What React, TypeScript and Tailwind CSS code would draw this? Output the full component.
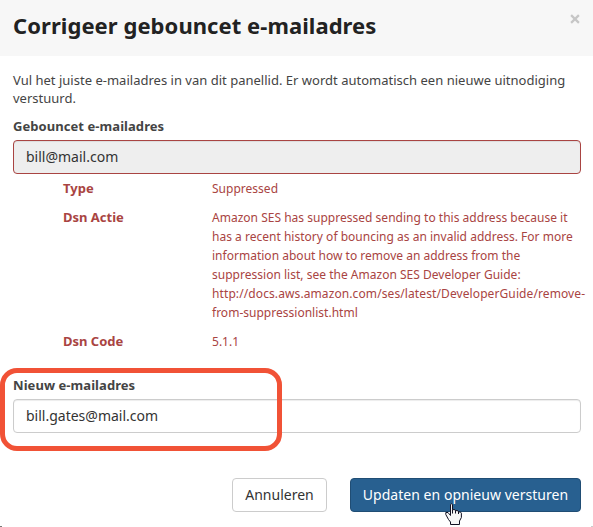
import React from "react";

const details = [
  { label: "Type", lines: ["Suppressed"] },
  {
    label: "Dsn Actie",
    lines: [
      "Amazon SES has suppressed sending to this address because it",
      "has a recent history of bouncing as an invalid address. For more",
      "information about how to remove an address from the",
      "suppression list, see the Amazon SES Developer Guide:",
      "http://docs.aws.amazon.com/ses/latest/DeveloperGuide/remove-",
      "from-suppressionlist.html",
    ],
  },
  { label: "Dsn Code", lines: ["5.1.1"] },
];

function HandCursor() {
  return (
    <svg className="absolute left-[445px] top-[503px]" width="18" height="23" viewBox="0 0 18 23">
      <path
        d="M5.5 1.5Q6.5 .2 7.5 1.5V6.5L10 6.8 10.5 7.5 13 7.8 13.8 8.8 15.6 9.2 16.4 10.2V14.5L14.5 18V21.5H5.5V19L3.5 16.5 .8 11.5V9.5H3L5.5 12.5Z"
        fill="#f6f6f6"
        stroke="#111122"
        strokeWidth="1"
        strokeLinejoin="round"
      />
      <path d="M7.5 6.5V10.5M10.5 7.5V10.5M13.5 8.5V11" stroke="#111122" fill="none" />
    </svg>
  );
}

export default function App() {
  return (
    <div className="relative h-[527px] w-[593px] overflow-hidden bg-white font-['Noto_Sans','Open_Sans',sans-serif] text-[13px] text-[#444444]">
      <header className="flex h-14 items-start justify-between bg-[#f7f7f7] pl-[13px] pr-[12px]">
        <h1 className="pt-[9px] text-[22px] font-bold leading-[32px] tracking-[0.06px] text-[#222222]">Corrigeer gebouncet e-mailadres</h1>
        <button aria-label="Sluiten" className="mt-[14px]">
          <svg width="12" height="10" viewBox="0 0 12 10">
            <path d="M2.1 1.1 9.9 8.9M9.9 1.1 2.1 8.9" stroke="#c6c6c6" strokeWidth="2.2" />
          </svg>
        </button>
      </header>
      <main className="px-[13px] pr-[12px] pt-[15px]">
        <p className="whitespace-nowrap leading-[18px] tracking-[0.01px]">
          Vul het juiste e-mailadres in van dit panellid. Er wordt automatisch een nieuwe uitnodiging
          <br />
          verstuurd.
        </p>
        <div className="mt-[10px] text-[13px] font-bold leading-[18px] tracking-[0.06px]">Gebouncet e-mailadres</div>
        <div className="mt-[5px] flex h-[34px] items-center rounded border border-[#a94442] bg-[#eeeeee] px-3 text-sm text-[#333333] shadow-[inset_0_1px_1px_rgba(0,0,0,0.075)]">
          bill@mail.com
        </div>
        <dl className="mt-[5px] flex flex-col gap-[10px] pl-[50px] text-[#a94442]">
          {details.map((d) => (
            <div key={d.label} className="flex">
              <dt className="w-[149px] shrink-0 font-bold leading-[19px]">{d.label}</dt>
              <dd className="whitespace-nowrap text-xs leading-[19px]">
                {d.lines.map((l) => (
                  <div key={l} className={l.startsWith("http") ? "tracking-[0.1px]" : "tracking-[0.015px]"}>
                    {l}
                  </div>
                ))}
              </dd>
            </div>
          ))}
        </dl>
        <div className="mt-[25px] text-[13px] font-bold leading-[18px] tracking-[0.06px]">Nieuw e-mailadres</div>
        <div className="mt-[5px] flex h-[34px] items-center rounded border border-[#cccccc] bg-white px-3 text-sm text-[#333333] shadow-[inset_0_1px_1px_rgba(0,0,0,0.075)]">
          bill.gates@mail.com
        </div>
      </main>
      <footer className="mt-[45px] flex justify-end gap-[23px] pr-[12px] text-sm">
        <button className="h-[34px] w-[95px] whitespace-nowrap rounded border border-[#cccccc] bg-white text-[#333333]">Annuleren</button>
        <button className="h-[34px] w-[231px] whitespace-nowrap rounded border border-[#204d74] bg-[#286090] tracking-[0.03px] text-white">
          Updaten en opnieuw versturen
        </button>
      </footer>
      <div className="absolute left-0 top-[368px] h-[83px] w-[282px] rounded-[17px] border-[5px] border-[#f15236]" />
      <div className="absolute bottom-0 left-0 h-px w-[2px] bg-[#777777]" />
      <div className="absolute bottom-0 right-0 h-px w-[2px] bg-[#cccccc]" />
      <HandCursor />
    </div>
  );
}
